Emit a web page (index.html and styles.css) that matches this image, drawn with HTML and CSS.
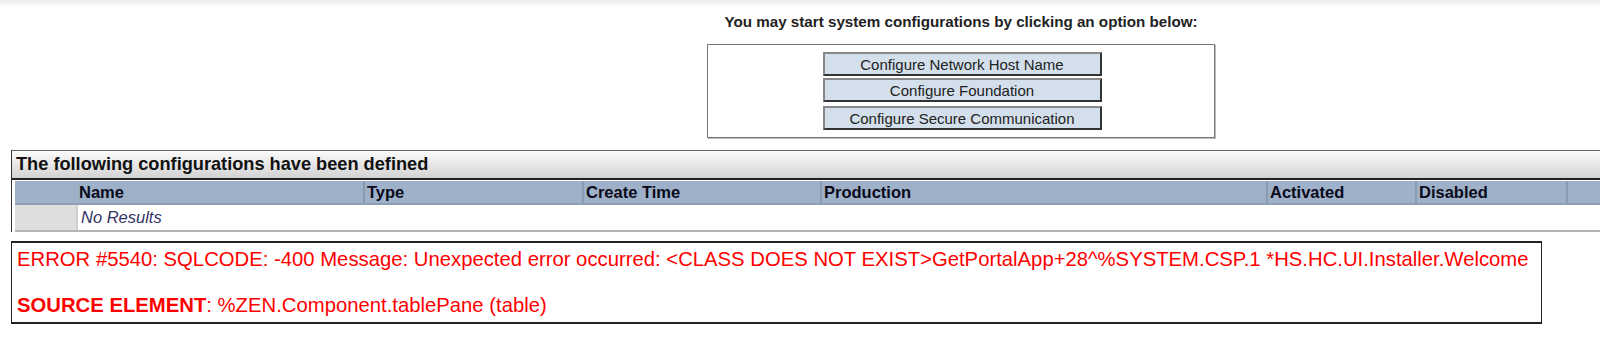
FILE: index.html
```html
<html>
    <head>
        <link rel="stylesheet" href="styles.css">
    </head>
    <body>
        <div class="topShade"></div>

        <div class="intro">
            <div class="introTitle">You may start system configurations by clicking an option below:</div>
            <div class="optionBox">
                <button class="optionBtn">Configure Network Host Name</button>
                <button class="optionBtn">Configure Foundation</button>
                <button class="optionBtn gapTop">Configure Secure Communication</button>
            </div>
        </div>

        <div class="tablePane">
            <div class="paneCaption">The following configurations have been defined</div>
            <table class="tpTable">
                <tr class="tpHead">
                    <th class="tpSel"></th>
                    <th class="colName">Name</th>
                    <th class="colType">Type</th>
                    <th class="colTime">Create Time</th>
                    <th class="colProd">Production</th>
                    <th class="colAct">Activated</th>
                    <th class="colDis">Disabled</th>
                    <th class="colEnd"></th>
                </tr>
                <tr class="tpRow">
                    <td class="tpSel"></td>
                    <td class="tpEmpty" colspan="7">No Results</td>
                </tr>
            </table>
        </div>

        <div class="errorBox">
            <div>ERROR #5540: SQLCODE: -400 Message: Unexpected error occurred: &lt;CLASS DOES NOT EXIST&gt;GetPortalApp+28^%SYSTEM.CSP.1 *HS.HC.UI.Installer.Welcome</div>
            <br/>
            <div><b>SOURCE ELEMENT</b>: %ZEN.Component.tablePane (table)</div>
        </div>
    </body>
</html>
```

FILE: styles.css
```css
body {
    margin: 0;
    font-family: "Liberation Sans", Arial, sans-serif;
    background-color: white;
    overflow: hidden;
}
.topShade {
    height: 8px;
    background: linear-gradient(#ececec, #ffffff);
}
.intro {
    width: 508px;
    margin-left: 707px;
}
.introTitle {
    font-size: 15.2px;
    font-weight: bold;
    color: #222;
    text-align: center;
    margin-top: 5px;
    height: 31px;
}
.optionBox {
    border: 1px solid #777;
    box-shadow: 1px 1px 0 #bbb;
    height: 94px;
    padding-top: 7px;
    box-sizing: border-box;
    display: flex;
    flex-direction: column;
    align-items: center;
}
.optionBtn {
    width: 279px;
    height: 24px;
    margin-left: 2px;
    margin-bottom: 2px;
    background-color: #d3e0ec;
    border: 2px solid;
    border-color: #888 #333 #333 #888;
    font-family: "Liberation Sans", Arial, sans-serif;
    font-size: 15px;
    color: #222;
    padding: 0;
}
.gapTop {
    margin-top: 2px;
}
.tablePane {
    margin-top: 12px;
    margin-left: 11px;
    width: 1640px;
    border-left: 1px solid #333;
}
.paneCaption {
    height: 27px;
    line-height: 27px;
    padding-left: 4px;
    font-size: 18.2px;
    font-weight: bold;
    color: #111;
    background: linear-gradient(#fbfbfb, #d2d2d2);
    border-top: 1px solid #666;
    border-bottom: 2px solid #222;
}
.tpTable {
    border-collapse: collapse;
    margin-top: 1px;
    margin-left: 3px;
    table-layout: fixed;
    width: 1620px;
}
.tpHead th {
    height: 23px;
    background-color: #9eb1c9;
    border-right: 2px solid #8a9bb0;
    border-bottom: 2px solid #8e9fb3;
    text-align: left;
    font-size: 16.5px;
    color: #0a0a1a;
    padding: 0 0 0 2px;
}
.tpSel {
    width: 60px;
}
th.tpSel {
    border-right: none;
}
.colName { width: 284px; }
.colType { width: 215px; }
.colTime { width: 234px; }
.colProd { width: 442px; }
.colAct { width: 145px; }
.colDis { width: 147px; }
.tpRow td {
    height: 27px;
    padding: 0;
    border-bottom: 2px solid #b5b5b5;
    font-size: 16.5px;
}
td.tpSel {
    background-color: #dedede;
    border-right: 2px solid #cfcfcf;
}
.tpEmpty {
    font-style: italic;
    color: #333366;
}
td.tpEmpty {
    padding-left: 3px;
}
.errorBox {
    margin-top: 9px;
    margin-left: 11px;
    width: 1531px;
    height: 83px;
    box-sizing: border-box;
    border: 1px solid #222;
    border-width: 2px 1px 2px 1px;
    padding: 5px 0 0 5px;
    color: #ff0000;
    font-size: 20.3px;
    line-height: 23px;
}
```
